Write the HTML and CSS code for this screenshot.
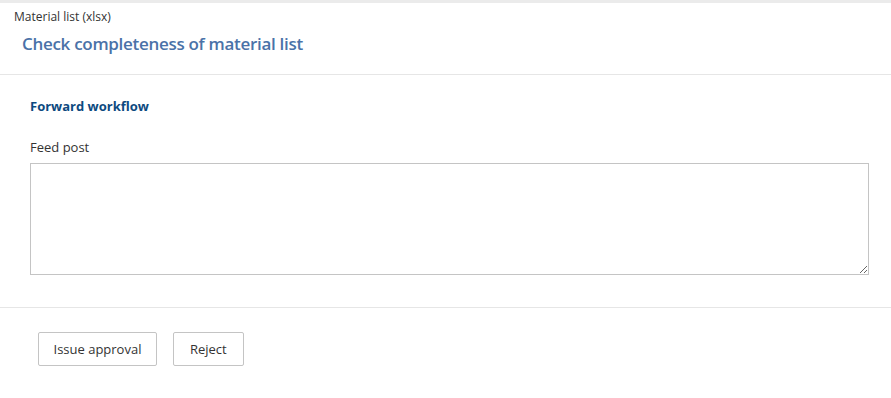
FILE: index.html
```html
<!DOCTYPE html>
<html>
<head>
<meta charset="utf-8">
<link rel="stylesheet" href="styles.css">
</head>
<body>
<div class="header">
  <div class="subtitle">Material list (xlsx)</div>
  <div class="title">Check completeness of material list</div>
</div>
<div class="section">
  <div class="section-title">Forward workflow</div>
  <label class="label" for="post">Feed post</label>
  <textarea id="post" class="post"></textarea>
</div>
<div class="actions">
  <button class="btn">Issue approval</button>
  <button class="btn btn-narrow">Reject</button>
</div>
</body>
</html>
```
FILE: styles.css
```css
html, body {
  margin: 0;
  background: #fff;
  font-family: "Open Sans", "Noto Sans", sans-serif;
  color: #333;
}
.header {
  border-top: 3px solid #ebebeb;
  padding: 6px 14px 18px;
  border-bottom: 1px solid #e6e6e6;
}
.subtitle {
  font-size: 12px;
  line-height: 16px;
  color: #333;
}
.title {
  margin: 7px 0 0 8px;
  font-size: 17px;
  line-height: 24px;
  font-weight: 600;
  letter-spacing: -0.3px;
  color: #4a72a8;
}
.section {
  padding: 22px 23px 32px 30px;
  border-bottom: 1px solid #e6e6e6;
  display: flex;
  flex-direction: column;
}
.section-title {
  font-size: 13px;
  line-height: 18px;
  font-weight: 700;
  color: #0d4a80;
}
.label {
  margin-top: 23px;
  font-size: 13px;
  line-height: 18px;
  color: #333;
}
.post {
  margin-top: 7px;
  box-sizing: border-box;
  width: 839px;
  height: 112px;
  border: 1px solid #c4c4c4;
  border-radius: 0;
  padding: 4px;
  font: inherit;
  outline: none;
}
.actions {
  padding: 24px 38px;
  display: flex;
  gap: 16px;
}
.btn {
  height: 34px;
  padding: 0 14.5px;
  background: #fff;
  border: 1px solid #c4c4c4;
  border-radius: 2px;
  font-family: inherit;
  font-size: 13px;
  color: #333;
}
.btn-narrow {
  padding: 0 16px;
}
```
